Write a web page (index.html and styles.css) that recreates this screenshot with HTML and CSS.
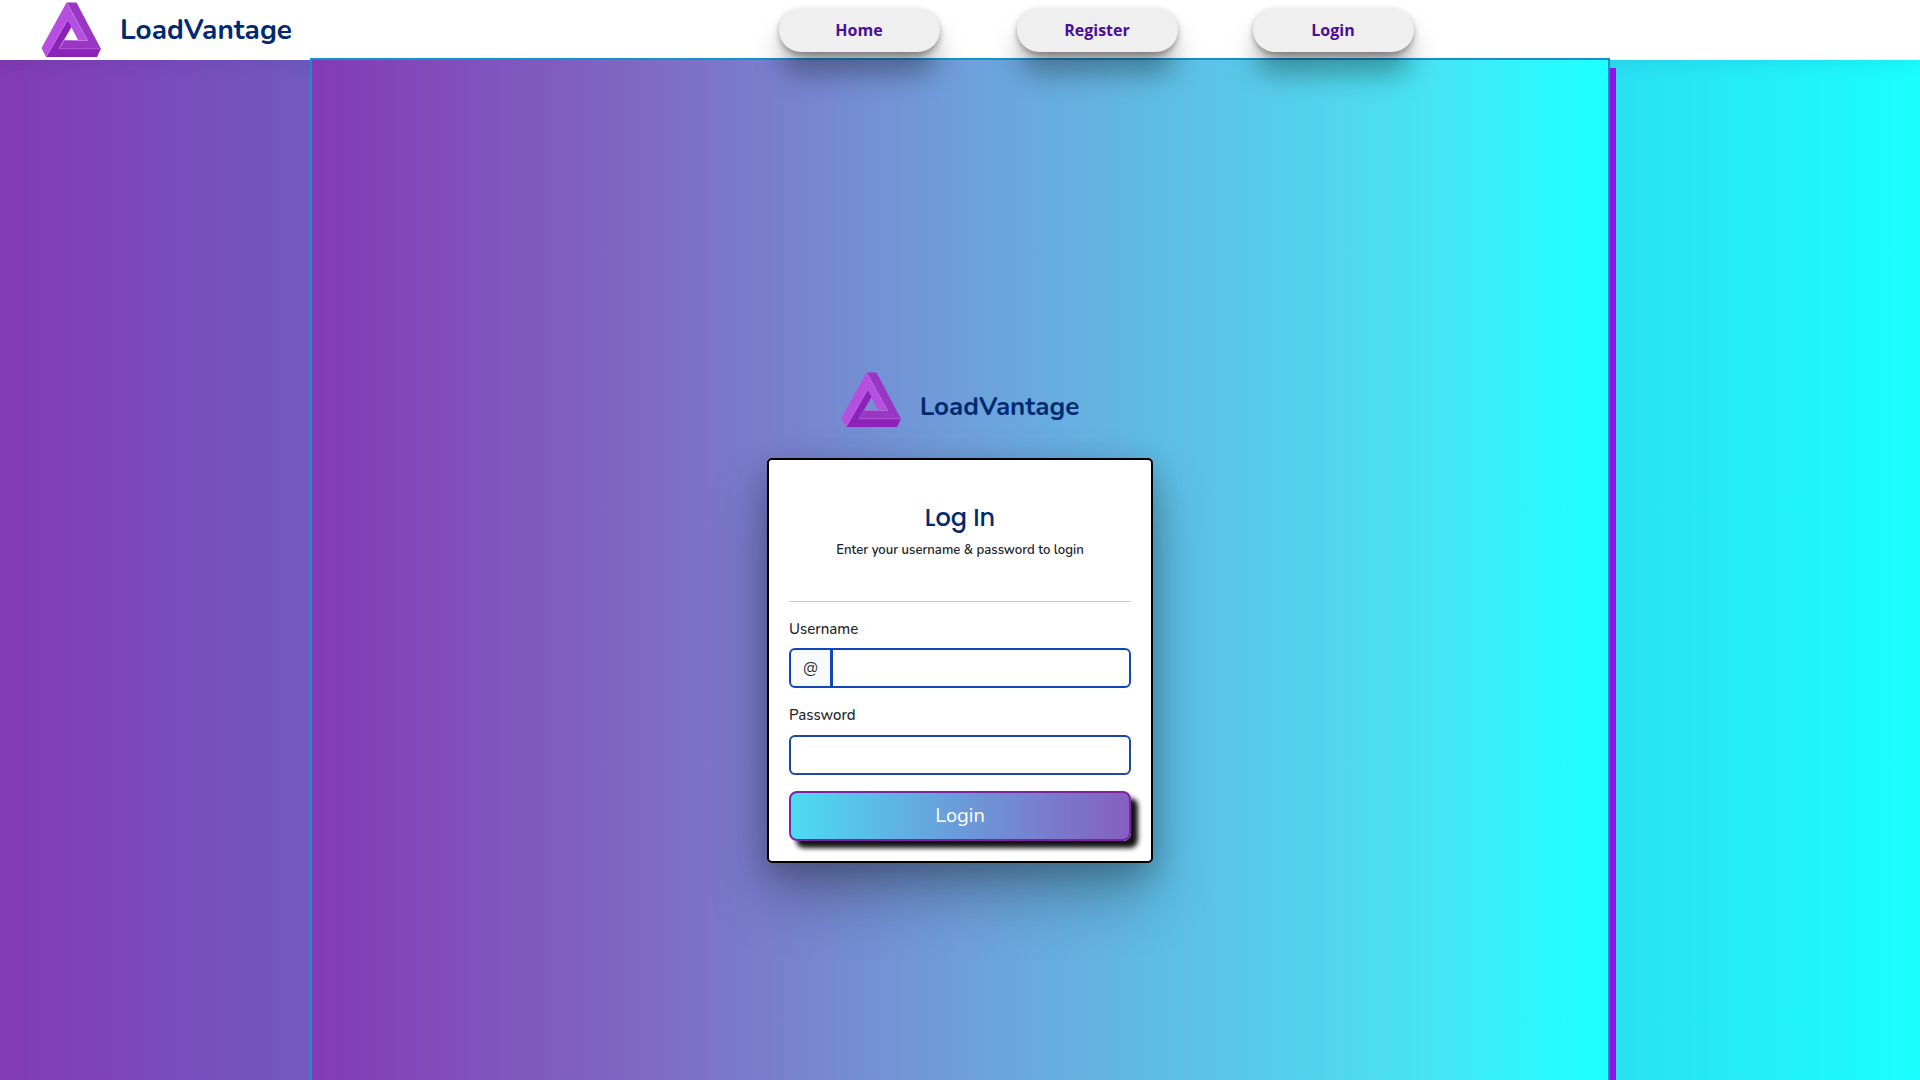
FILE: index.html
```html
<!DOCTYPE html>
<html lang="en">
<head>
<meta charset="utf-8">
<title>LoadVantage - Log In</title>
<link rel="stylesheet" href="styles.css">
</head>
<body>
<svg class="defs" width="0" height="0" aria-hidden="true">
  <symbol id="logo" viewBox="0 0 60 56">
    <polygon fill="#b64ee2" points="25.5,.5 .5,46 5,55 26.500,18 37,38 46.500,38.500"/>
    <polygon fill="#9a36c4" points="25.5,.5 35.5,.5 60,47 18,47 23.5,38 46.500,38.500"/>
    <polygon fill="#8d22bb" points="26.500,18 30.500,25 18,46.500 60,46.500 56,55 5,55"/>
    <path fill="none" stroke="#cf8bea" stroke-width=".5" d="M25.500 .5 46.500 38.500H23.500M18 46.700H59.500M26.500 18 5 55"/>
  </symbol>
</svg>
<header class="header">
  <a class="brand"><svg class="brand-logo"><use href="#logo"/></svg><span class="brand-name">LoadVantage</span></a>
  <nav class="nav">
    <a class="nav-button">Home</a>
    <a class="nav-button">Register</a>
    <a class="nav-button">Login</a>
  </nav>
</header>
<main class="main">
  <div class="brand brand-small"><svg class="brand-logo"><use href="#logo"/></svg><span class="brand-name">LoadVantage</span></div>
  <section class="card">
    <h1 class="title">Log In</h1>
    <p class="subtitle">Enter your username &amp; password to login</p>
    <hr class="rule">
    <form class="form">
      <label class="label" for="user">Username</label>
      <div class="group"><span class="at">@</span><input class="field field-user" id="user" type="text"></div>
      <label class="label label-password" for="pass">Password</label>
      <input class="field" id="pass" type="password">
      <button class="submit" type="button">Login</button>
    </form>
  </section>
</main>
</body>
</html>
```
FILE: styles.css
```css
* { box-sizing: border-box; }
html { overflow: hidden; }
body {
  margin: 0;
  height: 1080px;
  overflow: hidden;
  background: linear-gradient(90deg, #833ab4, #1affff);
  color: #212529;
  font-family: "Nunito", "Open Sans", sans-serif;
}
.defs { display: none; }
.header {
  height: 60px;
  padding-left: 41px;
  display: flex;
  background: #fff;
  box-shadow: 0 2px 20px rgba(1, 41, 112, .1);
}
.brand { display: flex; align-items: center; color: #012970; }
.brand-logo { width: 60px; height: 56px; margin-right: 19px; }
.brand-name { font-size: 28px; font-weight: 700; line-height: 1; white-space: nowrap; }
.header .brand { width: 737.5px; }
.nav { position: relative; z-index: 2; display: flex; align-items: flex-start; gap: 76px; padding-top: 8px; }
.nav-button {
  width: 161px;
  height: 44px;
  border-radius: 22px;
  background: #efefef;
  color: #4b0d9a;
  font: 700 16px/44px "Open Sans", sans-serif;
  text-align: center;
  box-shadow: 0 3px 6px rgba(0, 0, 0, .34), 0 24px 28px -3px rgba(0, 0, 0, .34);
}
.nav-button:nth-child(2) { margin: 0 -1px 0 1px; }
.main {
  position: relative;
  z-index: 1;
  width: 1300px;
  height: 1022px;
  margin: -2px auto 0;
  padding-top: 312px;
  display: flex;
  flex-direction: column;
  align-items: center;
  border: 2px solid #168fd0;
  border-bottom: 0;
  background: linear-gradient(90deg, #833ab4 0%, #7e6cc5 27%, #6f9fda 50%, #50d8ee 80%, #45e6f4 87%, #20ffff 98.5%);
  box-shadow: 6px 10px #920fe8;
}
.brand-small .brand-logo { margin-right: 19px; }
.brand-small .brand-name { font-size: 26px; padding-top: 14px; }
.card {
  width: 386px;
  height: 405px;
  margin-top: 30px;
  padding: 38px 20px 0;
  border: 2px solid #000;
  border-radius: 5px;
  background: #fff;
  box-shadow: 0 34px 60px rgba(0, 0, 0, .26), 0 10px 30px rgba(0, 0, 0, .22);
}
.title { margin: 0; color: #012970; font: 500 24px/40px "Poppins", "Lato", sans-serif; text-align: center; }
.subtitle { margin: 2px 0 0; font-size: 13.12px; font-weight: 600; line-height: 20px; text-align: center; }
.rule { height: 1px; margin: 41px 0 16px; border: 0; background: #c7c8c9; }
.form { display: flex; flex-direction: column; }
.label { font-size: 15px; font-weight: 500; line-height: 22px; margin-bottom: 8px; }
.label-password { margin-bottom: 9px; }
.group { display: flex; margin-bottom: 16px; }
.at {
  width: 43px;
  height: 40px;
  border: 2px solid #1048bb;
  border-radius: 6px 0 0 6px;
  background: #f8f9fa;
  font-size: 16px;
  line-height: 36px;
  text-align: center;
}
.field { width: 100%; height: 40px; padding: 0 12px; border: 2px solid #1d47a5; border-radius: 6px; background: #fff; }
.field-user { flex: 1; margin-left: -1px; border-color: #1048bb; border-radius: 0 6px 6px 0; }
.submit {
  height: 50px;
  margin-top: 16px;
  border: 2px solid #7a25a5;
  border-radius: 8px;
  background: linear-gradient(270deg, #865fc1, #6a9bda 50%, #4cdcf2);
  color: #fff;
  font: 400 20px/44px "Nunito", "Open Sans", sans-serif;
  box-shadow: 7px 7px 5px #131313;
}
```
